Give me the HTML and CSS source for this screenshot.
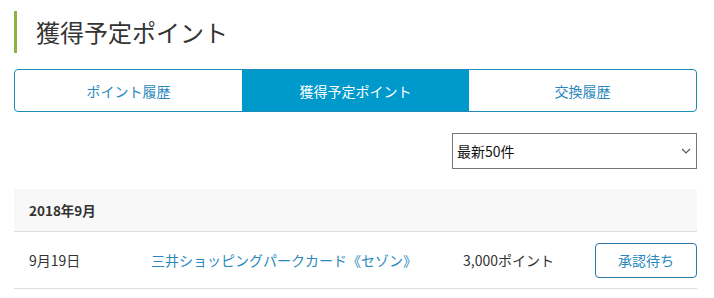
FILE: index.html
```html
<!DOCTYPE html>
<html lang="ja">
<head>
    <meta charset="UTF-8">
    <title>獲得予定ポイント</title>
    <meta name="viewport" content="width=device-width, initial-scale=1.0">
    <link rel="stylesheet" href="styles.css">
</head>
<body>

<div class="page">
    <h1 class="page-title">獲得予定ポイント</h1>

    <ul class="tabs">
        <li class="tab"><a href="#">ポイント履歴</a></li>
        <li class="tab active"><a href="#">獲得予定ポイント</a></li>
        <li class="tab"><a href="#">交換履歴</a></li>
    </ul>

    <div class="filter">
        <div class="select-box">
            <span class="select-label">最新50件</span>
            <svg class="select-arrow" width="10" height="6" viewBox="0 0 10 6">
                <path d="M1 1 L5 5 L9 1" fill="none" stroke="#555" stroke-width="1.1"/>
            </svg>
        </div>
    </div>

    <div class="month">2018年9月</div>
    <div class="row">
        <span class="row-date">9月19日</span>
        <a class="row-name" href="#">三井ショッピングパークカード《セゾン》</a>
        <span class="row-points">3,000ポイント</span>
        <span class="row-status">承認待ち</span>
    </div>
</div>

</body>
</html>
```

FILE: styles.css
```css
body {
    margin: 0;
    font-family: "Noto Sans CJK JP", "Noto Sans", sans-serif;
    color: #333;
    background: #fff;
}
.page {
    width: 683px;
    margin-left: 14px;
}
.page-title {
    margin: 11px 0 0;
    height: 42px;
    border-left: 3px solid #8cb443;
    padding-left: 19px;
    font-size: 24px;
    font-weight: normal;
    line-height: 42px;
    color: #333;
}
.tabs {
    display: flex;
    list-style: none;
    margin: 16px 0 0;
    padding: 0;
    height: 41px;
    border: 1px solid #1b8bb5;
    border-radius: 4px;
    overflow: hidden;
}
.tab {
    flex: 1;
    display: flex;
    align-items: center;
    justify-content: center;
}
.tab a {
    color: #2a88bd;
    font-size: 14px;
    text-decoration: none;
}
.tab.active {
    background: #0099cc;
}
.tab.active a {
    color: #fff;
}
.filter {
    display: flex;
    justify-content: flex-end;
    margin-top: 21px;
}
.select-box {
    width: 245px;
    height: 36px;
    box-sizing: border-box;
    border: 1px solid #777;
    display: flex;
    align-items: center;
    justify-content: space-between;
    padding: 0 4px;
}
.select-label {
    font-size: 14px;
    color: #111;
}
.select-arrow {
    margin-right: 1px;
}
.month {
    margin-top: 20px;
    height: 42px;
    line-height: 42px;
    background: #f8f8f8;
    border-bottom: 1px solid #ddd;
    padding-left: 15px;
    font-size: 13.5px;
    font-weight: bold;
    color: #333;
}
.row {
    display: flex;
    align-items: center;
    height: 56px;
    border-bottom: 1px solid #ddd;
    padding-left: 15px;
    font-size: 14px;
}
.row-date {
    width: 122px;
}
.row-name {
    width: 312px;
    color: #2a88bd;
    text-decoration: none;
}
.row-points {
    width: 132px;
}
.row-status {
    box-sizing: border-box;
    width: 102px;
    height: 35px;
    border: 1px solid #2a7aa8;
    border-radius: 4px;
    display: flex;
    align-items: center;
    justify-content: center;
    color: #2a88bd;
    font-size: 14px;
}
```
